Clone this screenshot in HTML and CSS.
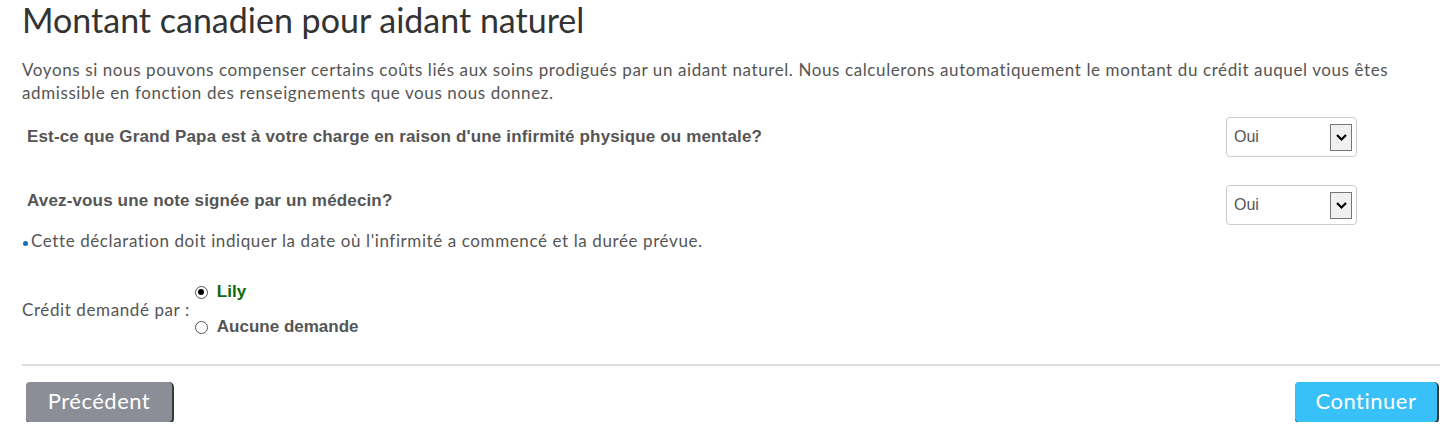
FILE: index.html
```html
<!DOCTYPE html>
<html lang="fr">
<head>
<meta charset="utf-8">
<link rel="stylesheet" href="styles.css">
</head>
<body>
<div class="page">
  <h1 class="title">Montant canadien pour aidant naturel</h1>
  <p class="intro">Voyons si nous pouvons compenser certains coûts liés aux soins prodigués par un aidant naturel. Nous calculerons automatiquement le montant du crédit auquel vous êtes admissible en fonction des renseignements que vous nous donnez.</p>

  <div class="qrow q1">
    <div class="qlabel">Est-ce que Grand Papa est à votre charge en raison d'une infirmité physique ou mentale?</div>
    <div class="select"><span class="sel-text">Oui</span><span class="sel-btn"><svg width="13" height="9" viewBox="0 0 13 9"><path d="M2 2 L6.5 6.5 L11 2" fill="none" stroke="#000" stroke-width="2.2"/></svg></span></div>
  </div>

  <div class="qrow q2">
    <div class="qlabel">Avez-vous une note signée par un médecin?</div>
    <div class="select"><span class="sel-text">Oui</span><span class="sel-btn"><svg width="13" height="9" viewBox="0 0 13 9"><path d="M2 2 L6.5 6.5 L11 2" fill="none" stroke="#000" stroke-width="2.2"/></svg></span></div>
  </div>

  <div class="note"><span class="dot"></span>Cette déclaration doit indiquer la date où l'infirmité a commencé et la durée prévue.</div>

  <div class="credit">
    <div class="credit-label">Crédit demandé par :</div>
    <div class="radios">
      <div class="radio-row"><span class="radio checked"></span><span class="rlabel green">Lily</span></div>
      <div class="radio-row"><span class="radio"></span><span class="rlabel">Aucune demande</span></div>
    </div>
  </div>

  <div class="divider"></div>

  <div class="actions">
    <button class="btn btn-prev">Précédent</button>
    <button class="btn btn-next">Continuer</button>
  </div>
</div>
</body>
</html>
```

FILE: styles.css
```css
* { box-sizing: border-box; }
html, body { margin: 0; padding: 0; background: #fff; }
body { font-family: "Lato", "Liberation Sans", sans-serif; color: #555; }
.page { padding: 0 9px 0 22px; width: 1449px; }
.title {
  margin: 0;
  font-weight: 400;
  font-size: 34px;
  line-height: 40px;
  color: #333;
}
.intro {
  margin: 18px 0 0 0;
  font-size: 17px;
  letter-spacing: 0.6px;
  line-height: 23px;
  color: #555;
  max-width: 1410px;
}
.qrow {
  display: flex;
  justify-content: space-between;
  align-items: center;
  padding-left: 5px;
  padding-right: 83px;
}
.q1 { margin-top: 13px; }
.q2 { margin-top: 28px; }
.q2 .qlabel { margin-top: -8px; }
.qlabel {
  font-family: "Liberation Sans", Arial, sans-serif;
  font-weight: 700;
  font-size: 17px;
  letter-spacing: 0.15px;
  color: #555;
}
.select {
  width: 131px;
  height: 40px;
  border: 1px solid #ccc;
  border-radius: 4px;
  display: flex;
  align-items: center;
  justify-content: space-between;
  padding: 0 4px 0 7px;
}
.sel-text {
  font-family: "Liberation Sans", Arial, sans-serif;
  font-size: 16px;
  color: #555;
}
.sel-btn {
  width: 22px;
  height: 27px;
  background: #f0f0f0;
  border: 1px solid #767676;
  display: flex;
  align-items: center;
  justify-content: center;
}
.note {
  margin-top: 5px;
  font-size: 17px;
  letter-spacing: 0.6px;
  line-height: 22px;
  color: #555;
  display: flex;
  align-items: center;
}
.dot {
  width: 5px;
  height: 5px;
  border-radius: 50%;
  background: #1a6fb5;
  margin: 4px 3px 0 1px;
}
.credit {
  display: flex;
  align-items: center;
  margin-top: 29px;
}
.credit-label {
  font-size: 17px;
  letter-spacing: 0.6px;
  color: #555;
  margin-right: 5px;
}
.radios { display: flex; flex-direction: column; gap: 13px; }
.radio-row { display: flex; align-items: center; height: 22px; }
.radio {
  width: 13px;
  height: 13px;
  border: 1px solid #555;
  border-radius: 50%;
  margin-right: 9px;
  position: relative;
  background: #fff;
}
.radio.checked::after {
  content: "";
  position: absolute;
  left: 2.5px; top: 2.5px;
  width: 6px; height: 6px;
  border-radius: 50%;
  background: #000;
}
.rlabel {
  font-family: "Liberation Sans", Arial, sans-serif;
  font-weight: 700;
  font-size: 17px;
  color: #555;
}
.rlabel.green { color: #0a6b0a; }
.divider {
  margin-top: 26px;
  height: 2px;
  background: #e0e0e0;
}
.actions {
  display: flex;
  justify-content: space-between;
  margin-top: 16px;
  padding-left: 4px;
  padding-right: 3px;
}
.btn {
  font-family: "Lato", sans-serif;
  font-size: 22px;
  letter-spacing: 0.5px;
  color: #fff;
  border: none;
  border-radius: 4px;
  height: 40px;
  padding: 0 0 4px 0;
  cursor: pointer;
  box-shadow: 1px 1px 0 1px #3a3a3a;
}
.btn-prev { width: 146px; background: #8b8e96; }
.btn-next { width: 142px; background: #38c0f8; }
```
